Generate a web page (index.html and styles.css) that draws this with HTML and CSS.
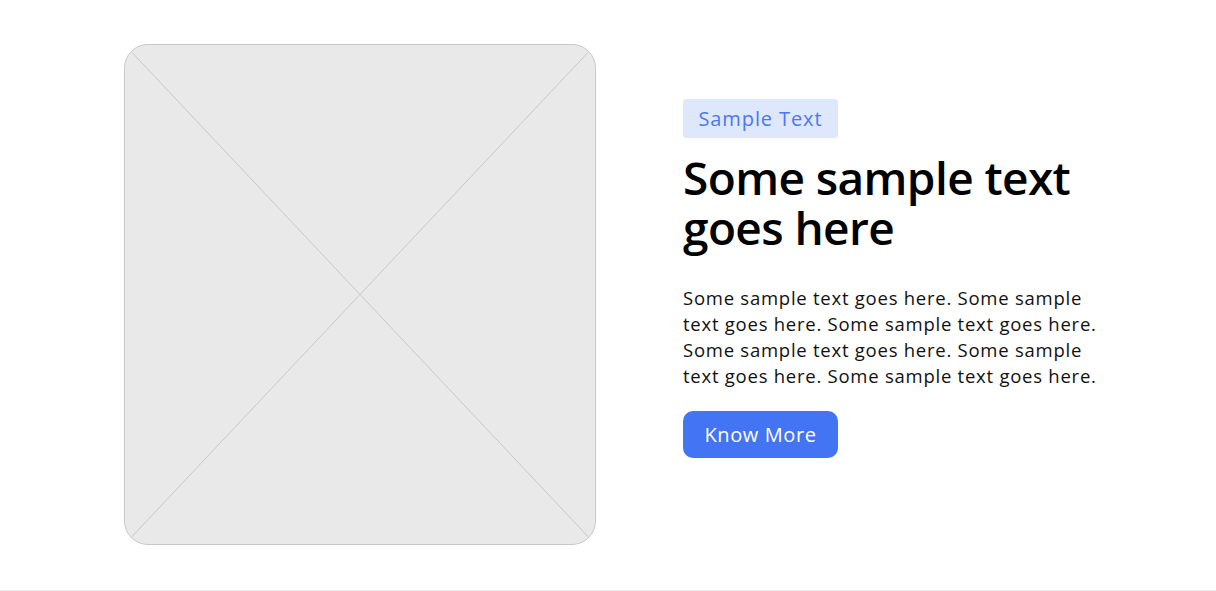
FILE: index.html
```
<!DOCTYPE html>
<html>
<head>
<meta charset="utf-8">
<link rel="stylesheet" href="styles.css">
</head>
<body>
<section class="feature">
  <div class="media">
    <svg class="placeholder-x" viewBox="0 0 472 501" preserveAspectRatio="none">
      <line x1="0" y1="0" x2="472" y2="501" />
      <line x1="472" y1="0" x2="0" y2="501" />
    </svg>
  </div>
  <div class="content">
    <span class="badge">Sample Text</span>
    <h1 class="title">Some sample text goes here</h1>
    <p class="body">Some sample text goes here. Some sample text goes here. Some sample text goes here. Some sample text goes here. Some sample text goes here. Some sample text goes here.</p>
    <a class="btn" href="#">Know More</a>
  </div>
</section>
</body>
</html>
```
FILE: styles.css
```
* { box-sizing: border-box; }
html, body { margin: 0; padding: 0; background: #fff; }
body { font-family: "Open Sans", "DejaVu Sans", sans-serif; color: #111; }

.feature {
  height: 591px;
  display: flex;
  justify-content: flex-start;
  align-items: flex-start;
  gap: 87px;
  padding: 44px 0 0 124px;
  border-bottom: 1px solid #ececec;
}

.media {
  width: 472px;
  height: 501px;
  flex: 0 0 auto;
  background: #e9e9e9;
  border: 1px solid #c9c9c9;
  border-radius: 24px;
  overflow: hidden;
}
.placeholder-x { display: block; width: 100%; height: 100%; }
.placeholder-x line { stroke: #c8c8c8; stroke-width: 1; }

.content {
  width: 432px;
  padding-top: 55px;
  display: flex;
  flex-direction: column;
  align-items: flex-start;
}

.badge {
  display: inline-block;
  width: 155px;
  height: 39px;
  line-height: 39px;
  text-align: center;
  background: #dfe7fd;
  color: #4a78f2;
  font-size: 20px;
  letter-spacing: 0.9px;
  border-radius: 3px;
}

.title {
  margin: 14px 0 0;
  font-size: 46px;
  line-height: 50px;
  font-weight: 600;
  letter-spacing: -0.6px;
  color: #000;
}

.body {
  margin: 33px 0 0;
  font-size: 18.5px;
  line-height: 26px;
  letter-spacing: 0.75px;
  color: #111;
}

.btn {
  margin-top: 22px;
  display: inline-block;
  width: 155px;
  height: 47px;
  line-height: 47px;
  text-align: center;
  background: #4274f3;
  color: #fff;
  font-size: 20px;
  letter-spacing: 0.6px;
  border-radius: 10px;
  text-decoration: none;
}
```
